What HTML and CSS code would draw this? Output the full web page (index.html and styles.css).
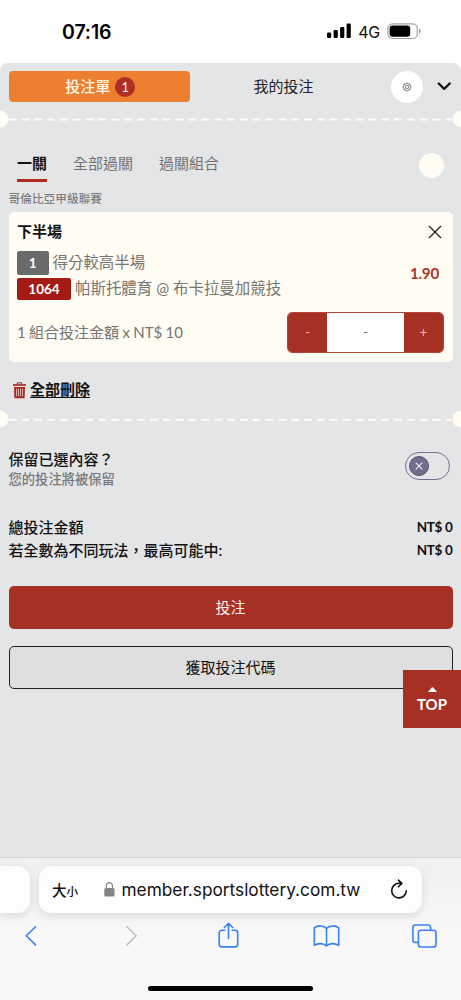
FILE: index.html
```html
<!DOCTYPE html>
<html lang="zh-Hant">
<head>
<meta charset="utf-8">
<meta name="viewport" content="width=device-width">
<title>投注單</title>
<link rel="stylesheet" href="styles.css">
</head>
<body>
<div class="phone">
  <header class="status">
    <span class="clock">07:16</span>
    <div class="signals">
      <svg width="25" height="16" viewBox="0 0 25 16"><rect x="0" y="9.5" width="4.2" height="5.5" rx="1.2"/><rect x="6.6" y="7" width="4.2" height="8" rx="1.2"/><rect x="13.1" y="4" width="4.2" height="11" rx="1.2"/><rect x="19.6" y="0.5" width="4.2" height="14.5" rx="1.2"/></svg>
      <span class="network">4G</span>
      <svg class="battery" width="35" height="17" viewBox="0 0 35 17"><rect x=".9" y=".9" width="29.4" height="14.6" rx="4.6" fill="none" stroke="#a2a2a2" stroke-width="1.2"/><rect x="2.6" y="2.6" width="20.6" height="11.2" rx="3"/><path d="M32 5.5q1.7.8 1.7 2.7T32 10.9z" fill="#a2a2a2"/></svg>
    </div>
  </header>

  <main class="sheet">
    <nav class="main-tabs">
      <button class="slip-tab"><span>投注單</span><span class="count">1</span></button>
      <span class="my-bets">我的投注</span>
      <span class="settings"><svg width="10" height="10" viewBox="0 0 24 24" fill="none" stroke="#444" stroke-width="1.8"><path d="M12 2l3 2.5 4 .4.4 4L22 12l-2.6 3.1-.4 4-4 .4L12 22l-3-2.500-4-.4-.4-4L2 12l2.600-3.100.4-4 4-.4z" stroke-linejoin="round"/><rect x="8.500" y="8.500" width="7" height="7" rx="2"/></svg></span>
      <svg class="collapse" width="14" height="9" viewBox="0 0 14 9"><path d="M1.700 1.500L7.200 6.800l5.500-5.300" fill="none" stroke="#111" stroke-width="2.300" stroke-linecap="round" stroke-linejoin="round"/></svg>
    </nav>
    <svg class="perforation" viewBox="0 0 461 18"><path d="M8.600 9.400H452" stroke-dasharray="7.800 5.050"/><circle cx="0" cy="9" r="8.500"/><circle cx="461" cy="9" r="8.500"/></svg>

    <div class="pass-tabs">
      <span class="pass active">一關</span><span class="pass">全部過關</span><span class="pass">過關組合</span>
      <i class="dot"></i>
    </div>
    <div class="league">哥倫比亞甲級聯賽</div>

    <section class="card">
      <div class="card-head"><span>下半場</span><svg width="14" height="14" viewBox="0 0 14 14"><path d="M1 1l12 12M13 1L1 13" stroke="#222" stroke-width="1.300"/></svg></div>
      <div class="pick">
        <div class="pick-lines">
          <div class="line"><b class="tag grey">1</b><span>得分較高半場</span></div>
          <div class="line"><b class="tag red">1064</b><span>帕斯托體育 @ 布卡拉曼加競技</span></div>
        </div>
        <strong class="odds">1.90</strong>
      </div>
      <div class="stake"><span class="stake-text">1 組合投注金額 x NT$ 10</span>
        <div class="stepper"><button>-</button><span>-</span><button>+</button></div>
      </div>
    </section>

    <div class="clear">
      <svg width="13" height="17" viewBox="0 0 13 17" fill="none" stroke="#aa281f"><path d="M4.300 2.300V.8h4.400v1.500" stroke-width="1"/><path d="M0 3h13" stroke-width="1.700"/><path d="M1 5h11l-.4 11.200H1.400z" fill="#aa281f" stroke="none"/><path d="M3.500 6.700v7.600M5.500 6.700v7.600M7.500 6.700v7.600M9.500 6.700v7.600" stroke="#ecd0cc" stroke-width=".8"/></svg>
      <span>全部刪除</span>
    </div>
    <svg class="perforation" viewBox="0 0 461 18"><path d="M8.600 9.700H452" stroke-dasharray="7.800 5.050"/><circle cx="0" cy="9" r="8.500"/><circle cx="461" cy="9" r="8.500"/></svg>

    <div class="keep">
      <div><div class="keep-title">保留已選內容？</div><div class="keep-note">您的投注將被保留</div></div>
      <span class="toggle"><i><svg width="8" height="8" viewBox="0 0 8 8"><path d="M.7.7l6.600 6.600M7.300.7L.7 7.300" stroke="#eeeef4" stroke-width="1.100"/></svg></i></span>
    </div>
    <dl class="totals">
      <div><dt>總投注金額</dt><dd>NT$ 0</dd></div>
      <div><dt>若全數為不同玩法，最高可能中:</dt><dd>NT$ 0</dd></div>
    </dl>
    <button class="action place">投注</button>
    <button class="action code">獲取投注代碼</button>
    <a class="top"><svg width="9" height="5" viewBox="0 0 9 5"><path d="M0 5l3.600-4.300q.9-.8 1.800 0L9 5z" fill="#fff"/></svg>TOP</a>
  </main>

  <footer class="browser">
    <div class="address-row">
      <div class="previous-page"></div>
      <div class="address">
        <span class="text-size">大<small>小</small></span>
        <svg class="lock" width="11" height="15" viewBox="0 0 11 15"><rect x=".3" y="6" width="10.200" height="8.500" rx="1.500" fill="#858589"/><path d="M2.300 7V4a3.100 3.300 0 0 1 6.200 0v3" fill="none" stroke="#858589" stroke-width="1.200"/></svg>
        <span class="url">member.sportslottery.com.tw</span>
        <svg class="reload" width="18" height="21" viewBox="0 0 18 21" fill="none" stroke="#111" stroke-width="1.600" stroke-linecap="round" stroke-linejoin="round"><path d="M9.800 4.300H9a7.300 7.300 0 1 0 7.300 7.500M8.400 1.200l3.400 3.200-3.400 3.400"/></svg>
      </div>
    </div>
    <div class="tools">
      <svg width="461" height="30" viewBox="0 0 461 30" fill="none" stroke="#3a82f7" stroke-width="1.600" stroke-linecap="round" stroke-linejoin="round">
        <path d="M35.500 5.700L26.200 14.800l9.300 9.100"/>
        <path d="M126.900 5.700l9.300 9.100-9.300 9.100" stroke="#bfbfc1"/>
        <path d="M224.800 9.200h-3a2.600 2.600 0 0 0-2.600 2.600v11.500a2.600 2.600 0 0 0 2.600 2.600h13.300a2.600 2.600 0 0 0 2.600-2.600V11.800a2.600 2.600 0 0 0-2.600-2.600h-3M228.500 17.500V2.500M224.300 6.500l4.200-4.200 4.200 4.200"/>
        <path d="M326.500 7.500c-2.500-3.200-9-3.400-12.200-.7v17.500c3.500-2.400 9-2.200 12.200.5 3.200-2.700 8.700-2.900 12.200-.5V6.800c-3.200-2.700-9.700-2.500-12.200.7zM326.500 7.500v17.300"/>
        <path d="M417.800 21.400h-2.400a2.500 2.500 0 0 1-2.500-2.500V6.500a2.500 2.500 0 0 1 2.500-2.500h12.800a2.500 2.500 0 0 1 2.500 2.500v2.500"/><rect x="418.400" y="9.200" width="17.600" height="16.800" rx="2.600"/>
      </svg>
    </div>
    <div class="home"></div>
  </footer>
</div>
</body>
</html>
```
FILE: styles.css
```css
* { box-sizing: border-box; }
body { margin: 0; background: #fefefe; font-family: Lato, "Noto Sans CJK TC", sans-serif; color: #111; }
svg { display: block; flex: none; }
button { font: inherit; border: 0; padding: 0; margin: 0; }
.phone { width: 461px; height: 1000px; display: flex; flex-direction: column; overflow: hidden; }

.status { height: 63px; flex: none; display: flex; justify-content: space-between; padding: 0 39px 0 62px; font-family: Inter, "Liberation Sans", sans-serif; }
.clock { font-size: 19.5px; font-weight: 600; line-height: 64px; letter-spacing: -.1px; color: #000; }
.signals { display: flex; height: 62px; align-items: center; }
.network { font-size: 16px; margin-left: 6px; line-height: 62px; letter-spacing: -.3px; padding-top: 1px; }
.battery { margin-left: 7px; }

.sheet { position: relative; height: 794px; flex: none; background: #e4e5e7; border-radius: 8px 8px 0 0; display: flex; flex-direction: column; }
.main-tabs { display: flex; align-items: center; height: 47px; flex: none; padding: 0 10px 0 8.5px; font-size: 15px; }
.slip-tab { width: 181.5px; height: 30.5px; border-radius: 4px; background: #ed8030; color: #fff6ea; display: flex; align-items: center; justify-content: center; gap: 5px; padding-left: 2px; font-weight: 500; line-height: 20px; }
.slip-tab span:first-child { padding-bottom: 2px; }
.count { width: 20px; height: 20px; border-radius: 50%; background: #b12d21; color: #fff; font-size: 13px; font-weight: 400; line-height: 20px; }
.my-bets { margin-left: 63.5px; padding-bottom: 2px; color: #222; width: 60px; white-space: nowrap; }
.settings { width: 32px; height: 32px; margin-left: 77.500px; border-radius: 50%; background: #fff; display: grid; place-items: center; }
.collapse { margin-left: 14px; }
.perforation { width: 461px; height: 18px; fill: #fffcf3; stroke: #fffcf3; stroke-width: 2; }
.perforation circle { stroke: none; }

.pass-tabs { display: flex; height: 54px; flex: none; padding: 17px 17.500px 0 17px; gap: 26px; }
.pass { height: 37px; font-size: 15px; line-height: 36px; color: #727272; white-space: nowrap; }
.pass.active { color: #111; font-weight: 700; border-bottom: 3px solid #b02a20; }
.dot { margin: 8px 0 0 auto; width: 25px; height: 25px; border-radius: 50%; background: #fffcf3; }
.league { height: 30px; flex: none; padding-left: 8.500px; font-size: 11.700px; line-height: 33px; color: #6c6c6c; }

.card { height: 149.500px; flex: none; margin: 0 8.500px; padding: 8px 8.500px; border-radius: 5px; background: #fffcf4; color: #757571; }
.card-head { display: flex; justify-content: space-between; align-items: center; height: 24px; padding-right: 2px; font-size: 15px; font-weight: 700; line-height: 20px; color: #111; }
.card-head span { padding-bottom: 3px; }
.pick { display: flex; justify-content: space-between; align-items: flex-start; height: 62px; padding-top: 6.500px; }
.pick-lines { display: flex; flex-direction: column; gap: 2px; }
.line { display: flex; align-items: center; gap: 4px; font-size: 15.450px; line-height: 22px; height: 24px; white-space: nowrap; }
.line span { padding-bottom: 1px; }
.tag { color: #fff; font-size: 13.500px; text-align: center; border-radius: 2px; }
.grey { width: 31.500px; height: 24px; line-height: 24px; background: #6a6a6a; }
.red { width: 54px; height: 22px; line-height: 22px; background: #a41c15; }
.odds { color: #b13224; font-size: 15.200px; line-height: 20px; margin: 12px 5px 0 0; letter-spacing: -.25px; }
.stake { display: flex; justify-content: space-between; align-items: center; height: 41px; margin-top: 6px; font-size: 15px; }
.stake-text { padding-bottom: 2px; word-spacing: -.5px; }
.stepper { width: 157px; height: 41px; display: flex; border: 1px solid #b84439; border-radius: 5px; overflow: hidden; text-align: center; font-size: 13.500px; line-height: 39px; background: #fff; }
.stepper button { width: 39px; background: #a63024; color: #eab8b0; }
.stepper span { flex: 1; }

.clear { display: flex; align-items: center; gap: 4.500px; height: 48.500px; flex: none; padding: 9px 0 0 12.500px; font-size: 15px; font-weight: 700; line-height: 20px; }
.clear span { padding-bottom: 3px; text-decoration: underline; text-decoration-thickness: 1px; text-underline-offset: 2px; }

.keep { display: flex; justify-content: space-between; height: 88px; flex: none; padding: 20.500px 11px 0 8.500px; }
.keep-title { font-size: 15px; font-weight: 500; line-height: 21px; }
.keep-note { font-size: 13.300px; font-weight: 500; line-height: 19px; color: #777; }
.toggle { width: 45px; height: 28px; margin-top: 3.500px; border: 1px solid #747092; border-radius: 14px; padding: 3px; }
.toggle i { display: grid; place-items: center; width: 20px; height: 20px; border: 1px solid #55526f; border-radius: 50%; background: #716f8d; }
.totals { margin: 0 8.500px; height: 70px; flex: none; font-weight: 500; }
.totals div { display: flex; justify-content: space-between; height: 23px; line-height: 23px; }
dt { font-size: 15px; }
dd { margin: 0; font-size: 13.500px; font-weight: 700; letter-spacing: -.35px; }
.action { height: 43px; flex: none; margin: 0 8.500px 17px; padding-bottom: 2px; border-radius: 5px; font-size: 15px; }
.place { background: #a63024; color: #fff0ea; }
.code { border: 1px solid #222; background: #dfdfdf; color: #111; }
.top { position: absolute; right: 0; top: 607px; width: 58px; height: 58px; background: #a63024; color: #fff; display: flex; flex-direction: column; align-items: center; padding-top: 17px; gap: 2px; font-size: 15px; font-weight: 700; line-height: 20px; }

.browser { height: 143px; flex: none; border-top: 1px solid #d2d2d4; background: linear-gradient(#f0f0f1, #f8f8f9 55%, #f9f9f9); font-family: Inter, "Liberation Sans", "Noto Sans CJK TC", sans-serif; }
.address-row { display: flex; gap: 9px; height: 63px; padding-top: 8px; }
.previous-page { width: 30px; height: 47px; border-radius: 0 12px 12px 0; background: #fdfdfd; box-shadow: 0 3px 10px #0000001c; }
.address { width: 383px; height: 47px; border-radius: 12px; background: #fdfdfd; box-shadow: 0 3px 10px #0000001c; display: flex; align-items: center; padding: 0 14.500px 0 13px; }
.text-size { width: 51.500px; font-size: 14.500px; font-weight: 500; white-space: nowrap; }
.text-size small { font-size: 11.500px; }
.url { margin-left: 7px; font-size: 17.250px; white-space: nowrap; }
.reload { margin-left: auto; }
.tools { height: 65px; }
.home { width: 165px; height: 5px; margin: 0 auto; border-radius: 3px; background: #000; }
```
